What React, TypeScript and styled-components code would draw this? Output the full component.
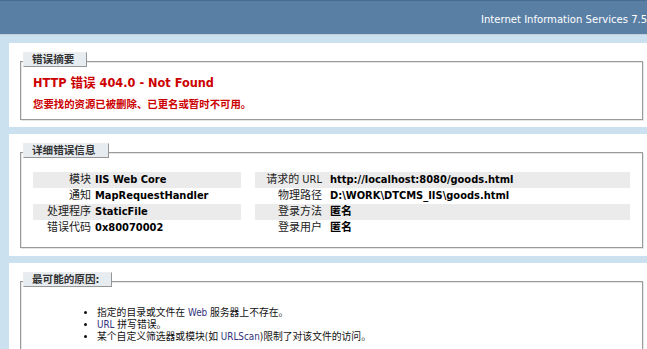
import React from 'react';
import styled, { createGlobalStyle } from 'styled-components';

const FONT = '"DejaVu Sans Condensed", "Liberation Sans", "Noto Sans CJK SC", sans-serif';

const GlobalStyle = createGlobalStyle`
  html, body { margin: 0; padding: 0; overflow: hidden; }
  body {
    background: #cbe1ef;
    font-family: ${FONT};
    font-size: 11px;
    color: #000;
  }
`;

const Page = styled.div`
  width: 664px;
`;

const ServerBar = styled.div`
  background: #5a7fa5;
  border-top: 1px solid #4a6c8e;
  border-bottom: 1px solid #c1cfdd;
  padding: 12px 0 7px 481px;
  line-height: 14px;
  color: #fff;
  font-size: 11.2px;
  white-space: nowrap;
  margin-bottom: 8px;
`;

const Panel = styled.section<{ $pb: number }>`
  background: #fff;
  width: 644px;
  box-sizing: border-box;
  margin: 0 0 7px 9px;
  padding: 18px 10px ${(p) => p.$pb}px 11px;
`;

const Group = styled.div<{ $pb: number }>`
  box-sizing: border-box;
  width: 623px;
  border: 1px solid #9a9a9a;
  box-shadow: inset 1px 1px 0 #e6e6e6, 1px 1px 0 #e6e6e6;
  padding: 0 12px ${(p) => p.$pb}px 12px;
`;

const Legend = styled.div`
  width: fit-content;
  margin: -10px 0 0 -10px;
  padding: 0 12px 0 8px;
  line-height: 13px;
  font-size: 10.6px;
  background: #e7ecf0;
  border-top: 1px solid #ededed;
  border-left: 1px solid #ededed;
  border-right: 1px solid #969696;
  border-bottom: 1px solid #969696;
  color: #333;
  font-weight: bold;
`;

const Title = styled.h2`
  margin: 8px 0 0;
  font-size: 12.6px;
  line-height: 16px;
  color: #cc0000;
  font-weight: bold;
`;

const SubTitle = styled.h3`
  margin: 6px 0 0;
  font-size: 10.4px;
  line-height: 14px;
  color: #cc0000;
  font-weight: bold;
`;

const Details = styled.div`
  display: flex;
  gap: 14px;
  margin-top: 14px;
`;

const DetailTable = styled.table<{ $w: number; $lw: number; $pr: number }>`
  width: ${(p) => p.$w}px;
  border-collapse: collapse;
  table-layout: fixed;
  th {
    width: ${(p) => p.$lw}px;
    padding: 2px ${(p) => p.$pr}px 2px 0;
    text-align: right;
    font-weight: normal;
    color: #222;
  }
  td {
    padding: 2px 0;
    text-align: left;
    font-weight: bold;
    color: #000;
    white-space: nowrap;
  }
  th, td {
    line-height: 12px;
    vertical-align: top;
  }
`;

const Row = styled.tr<{ $alt?: boolean }>`
  background: ${(p) => (p.$alt ? '#ebebeb' : 'transparent')};
`;

const CauseList = styled.ul`
  margin: 20px 0 0;
  padding: 0 0 20px 64px;
  list-style: disc;
  font-size: 9.8px;
  li {
    line-height: 12px;
    color: #111;
  }
`;

const Latin = styled.span`
  color: #33337a;
`;

type Item = [string, string];

const leftRows: Item[] = [
  ['模块', 'IIS Web Core'],
  ['通知', 'MapRequestHandler'],
  ['处理程序', 'StaticFile'],
  ['错误代码', '0x80070002'],
];

const rightRows: Item[] = [
  ['请求的 URL', 'http://localhost:8080/goods.html'],
  ['物理路径', 'D:\\WORK\\DTCMS_IIS\\goods.html'],
  ['登录方法', '匿名'],
  ['登录用户', '匿名'],
];

function Table({ rows, w, lw, pr }: { rows: Item[]; w: number; lw: number; pr: number }) {
  return (
    <DetailTable $w={w} $lw={lw} $pr={pr}>
      <tbody>
        {rows.map(([k, v], i) => (
          <Row key={k} $alt={i % 2 === 0}>
            <th>{k}</th>
            <td>{v}</td>
          </Row>
        ))}
      </tbody>
    </DetailTable>
  );
}

export default function App() {
  return (
    <Page>
      <GlobalStyle />
      <ServerBar>Internet Information Services 7.5</ServerBar>

      <Panel $pb={7}>
        <Group $pb={8}>
          <Legend>错误摘要</Legend>
          <Title>HTTP 错误 404.0 - Not Found</Title>
          <SubTitle>您要找的资源已被删除、已更名或暂时不可用。</SubTitle>
        </Group>
      </Panel>

      <Panel $pb={8}>
        <Group $pb={11}>
          <Legend>详细错误信息</Legend>
          <Details>
            <Table rows={leftRows} w={208} lw={58} pr={4} />
            <Table rows={rightRows} w={375} lw={67} pr={8} />
          </Details>
        </Group>
      </Panel>

      <Panel $pb={10}>
        <Group $pb={10}>
          <Legend>最可能的原因:</Legend>
          <CauseList>
            <li>指定的目录或文件在 <Latin>Web</Latin> 服务器上不存在。</li>
            <li><Latin>URL</Latin> 拼写错误。</li>
            <li>某个自定义筛选器或模块(如 <Latin>URLScan</Latin>)限制了对该文件的访问。</li>
          </CauseList>
        </Group>
      </Panel>
    </Page>
  );
}
